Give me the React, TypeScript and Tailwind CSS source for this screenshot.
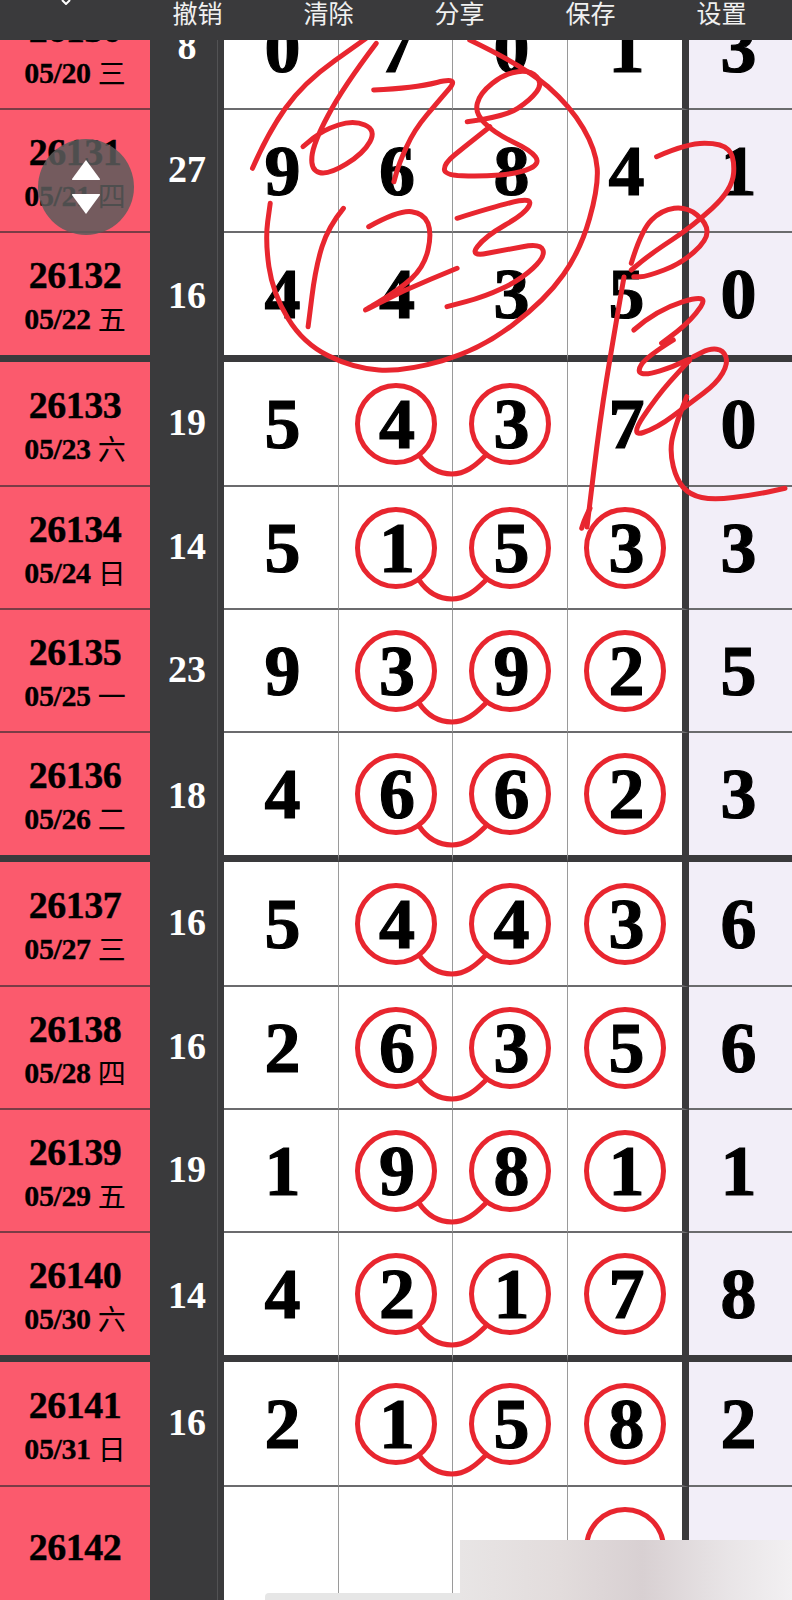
import React from "react";

type Row = { id: string; date?: string; day?: string; sum?: number; nums: (number | null)[]; circled: number[]; link: boolean };

const rows: Row[] = [
  { id: "26130", date: "05/20", day: "三", sum: 8, nums: [0, 7, 0, 1, 3], circled: [], link: false },
  { id: "26131", date: "05/21", day: "四", sum: 27, nums: [9, 6, 8, 4, 1], circled: [], link: false },
  { id: "26132", date: "05/22", day: "五", sum: 16, nums: [4, 4, 3, 5, 0], circled: [], link: false },
  { id: "26133", date: "05/23", day: "六", sum: 19, nums: [5, 4, 3, 7, 0], circled: [1, 2], link: true },
  { id: "26134", date: "05/24", day: "日", sum: 14, nums: [5, 1, 5, 3, 3], circled: [1, 2, 3], link: true },
  { id: "26135", date: "05/25", day: "一", sum: 23, nums: [9, 3, 9, 2, 5], circled: [1, 2, 3], link: true },
  { id: "26136", date: "05/26", day: "二", sum: 18, nums: [4, 6, 6, 2, 3], circled: [1, 2, 3], link: true },
  { id: "26137", date: "05/27", day: "三", sum: 16, nums: [5, 4, 4, 3, 6], circled: [1, 2, 3], link: true },
  { id: "26138", date: "05/28", day: "四", sum: 16, nums: [2, 6, 3, 5, 6], circled: [1, 2, 3], link: true },
  { id: "26139", date: "05/29", day: "五", sum: 19, nums: [1, 9, 8, 1, 1], circled: [1, 2, 3], link: true },
  { id: "26140", date: "05/30", day: "六", sum: 14, nums: [4, 2, 1, 7, 8], circled: [1, 2, 3], link: true },
  { id: "26141", date: "05/31", day: "日", sum: 16, nums: [2, 1, 5, 8, 2], circled: [1, 2, 3], link: true },
  { id: "26142", nums: [null, null, null, null, null], circled: [3], link: false },
];

function Digit({ value }: { value: number }) {
  return (
    <span className="pl-[3px] font-['Liberation_Serif',serif] text-[72px] font-bold leading-none text-black [-webkit-text-stroke:1.2px_#000]">
      {value}
    </span>
  );
}

function Cell({ value, circled, link, last, thick }: { value: number | null; circled: boolean; link: boolean; last: boolean; thick: boolean }) {
  const base = "relative flex items-center justify-center";
  const bottom = thick ? "border-b-[7px] border-b-[#3a3a3c]" : "border-b-2 border-b-[#6b6b6d]";
  const side = last ? "border-r-[7px] border-r-[#3a3a3c]" : "border-r border-r-[#9a9a9a]";
  return (
    <div className={`${base} ${bottom} ${side} bg-white`}>
      {value !== null && <Digit value={value} />}
      {circled && (
        <span className="absolute left-1/2 top-1/2 h-[82px] w-[82px] -translate-x-1/2 -translate-y-1/2 rounded-full border-[5px] border-[#e8262f]" />
      )}
      {link && (
        <svg className="absolute -right-[35px] top-[91px] z-10" width="70" height="24" viewBox="0 0 70 24" fill="none">
          <path d="M2 2 C10 14 20 21 35 21 C48 21 58 13 68 3" stroke="#e8262f" strokeWidth="5" strokeLinecap="round" />
        </svg>
      )}
    </div>
  );
}

function TableRow({ row, index }: { row: Row; index: number }) {
  const phase = (index + 1) % 4;
  const thick = phase === 3;
  const height = phase === 0 ? "h-[125px]" : thick ? "h-[129px]" : "h-[123px]";
  return (
    <div className={`grid grid-cols-[150px_74px_115px_114px_115px_121px_103px] ${height}`}>
      <div
        className={`flex flex-col items-center justify-center bg-[#fb5a6d] text-black font-['Liberation_Serif','Noto_Sans_CJK_SC',serif] ${
          row.date ? "pt-[6px]" : "pb-px"
        } ${thick ? "border-b-[7px] border-b-[#3a3a3c]" : "border-b-2 border-b-[#7a3c46]"}`}
      >
        <span className="text-[38px] font-bold leading-[43px] tracking-[-0.5px] [-webkit-text-stroke:0.4px_#000]">{row.id}</span>
        {row.date && (
          <span className="flex items-center gap-[7px] leading-[43px]">
            <span className="text-[30px] font-bold tracking-[-0.4px] [-webkit-text-stroke:0.3px_#000]">{row.date}</span>
            <span className="font-['Noto_Sans_CJK_SC',sans-serif] text-[28px] font-normal">{row.day}</span>
          </span>
        )}
      </div>
      <div className="flex items-center justify-center bg-[linear-gradient(to_right,#3a3a3c_67px,#525254_67px,#525254_68px,#3a3a3c_68px)] pb-1 font-['Liberation_Serif',serif] text-[38px] font-bold text-white">
        {row.sum}
      </div>
      {row.nums.slice(0, 4).map((n, i) => (
        <Cell key={i} value={n} circled={row.circled.includes(i)} link={row.link && i === 1} last={i === 3} thick={thick} />
      ))}
      <div
        className={`flex items-center justify-center bg-[#f2eef8] pr-[7px] ${
          thick ? "border-b-[7px] border-b-[#3a3a3c]" : "border-b-2 border-b-[#6b6b6d]"
        }`}
      >
        {row.nums[4] !== null && <Digit value={row.nums[4] as number} />}
      </div>
    </div>
  );
}

type P = [number, number][];
const a = (p: P) => p.map(([x, y]) => [x / 1.98, y / 3] as [number, number]);
const b = (p: P) => p.map(([x, y]) => [340 + x / 3, 340 + y / 3] as [number, number]);
const smooth = (p: [number, number][]) => {
  let d = `M${p[0][0].toFixed(1)} ${p[0][1].toFixed(1)}`;
  for (let i = 1; i < p.length - 1; i++) {
    const mx = (p[i][0] + p[i + 1][0]) / 2;
    const my = (p[i][1] + p[i + 1][1]) / 2;
    d += ` Q${p[i][0].toFixed(1)} ${p[i][1].toFixed(1)} ${mx.toFixed(1)} ${my.toFixed(1)}`;
  }
  const l = p[p.length - 1];
  return d + ` L${l[0].toFixed(1)} ${l[1].toFixed(1)}`;
};

const strokes = [
  a([[500,505],[530,400],[600,250],[725,115]]),
  a([[745,130],[680,260],[620,430],[615,510],[650,525],[720,460],[745,390],[700,360],[640,390],[600,440]]),
  a([[930,120],[1040,200],[1130,320],[1180,450],[1185,560],[1150,750],[1080,900],[950,1050],[800,1115],[700,1105],[600,1030],[540,880],[525,720],[535,610]]),
  a([[740,270],[820,265],[910,230],[870,300],[820,390],[790,490],[780,545]]),
  a([[925,365],[1000,350],[1050,300],[1075,250],[1050,210],[1000,220],[950,280],[940,340],[980,400],[1050,450],[1070,490],[1030,520],[950,530],[880,525],[880,490],[920,440],[970,380]]),
  a([[680,625],[650,680],[625,800],[610,980]]),
  a([[730,680],[790,630],[840,640],[855,700],[840,800],[790,870],[700,950],[800,870],[905,805]]),
  a([[905,655],[1000,610],[1055,595],[1040,640],[960,710],[930,770],[1000,750],[1070,730],[1080,770],[1030,840],[960,890],[885,920]]),
  a([[1300,470],[1360,430],[1430,430],[1455,470],[1450,570],[1370,680],[1290,760],[1250,810]]),
  a([[1250,790],[1270,690],[1310,630],[1360,620],[1400,670],[1400,720],[1350,790],[1280,830],[1255,830]]),
  [[624,277] as [number, number], [613,340] as [number, number], [600,420] as [number, number], [587,527] as [number, number]],
  b([[750,505],[735,535],[725,565]]),
  a([[1255,990],[1300,930],[1405,880],[1370,960],[1310,1030]]),
  b([[1000,0],[920,50],[890,95],[920,105],[1000,80],[1060,50],[1030,80],[950,170],[870,290],[950,265],[1050,190],[1130,130],[1165,70],[1150,30],[1110,25],[1060,50]]),
  b([[1040,170],[1000,270],[990,340],[1010,420],[1050,465],[1120,480],[1240,465],[1335,445]]),
];

export default function App() {
  return (
    <div className="relative h-[1600px] w-[792px] overflow-hidden bg-white">
      <header className="relative z-20 grid h-10 grid-cols-[131px_131px_131px_131px_131px_131px] bg-[#3a3a3c] pb-[29px] font-['Noto_Sans_CJK_SC',sans-serif] text-[25px] font-normal leading-none text-[#f0f0f0]">
        <div className="flex items-start justify-center">
          <svg width="14" height="5" viewBox="0 0 14 5" fill="none">
            <path d="M3 0 L7 4 L11 0" stroke="#ffffff" strokeWidth="2" />
          </svg>
        </div>
        {["撤销", "清除", "分享", "保存", "设置"].map((t) => (
          <div key={t} className="flex items-center justify-center pl-[2px]">
            {t}
          </div>
        ))}
      </header>

      <main className="-mt-[53px]">
        {rows.map((row, i) => (
          <TableRow key={row.id} row={row} index={i} />
        ))}
      </main>

      <svg className="absolute left-0 top-0 z-10" width="792" height="1600" viewBox="0 0 792 1600" fill="none">
        {strokes.map((s, i) => (
          <path key={i} d={smooth(s)} stroke="#e8262f" strokeWidth="5" strokeLinecap="round" strokeLinejoin="round" />
        ))}
      </svg>

      <div className="absolute left-[38px] top-[139px] z-30 flex h-24 w-24 items-center justify-center rounded-full bg-[#5c5c5c]/85">
        <svg width="30" height="56" viewBox="0 0 30 56" fill="#ffffff">
          <path d="M15 1 L29 20 Q29.5 21 28 21 L2 21 Q0.5 21 1 20 Z" />
          <path d="M15 55 L29 36 Q29.5 35 28 35 L2 35 Q0.5 35 1 36 Z" />
        </svg>
      </div>

      <div className="absolute bottom-0 left-[265px] z-30 h-[7px] w-[300px] rounded-t bg-[#e6e6e6]" />
      <div className="absolute bottom-0 right-0 z-30 h-[60px] w-[332px] bg-[linear-gradient(to_right,#e8e5e5,#e2dcdc_30%,#d8d0d2_55%,#e8e4e6_80%,#f2f0f2)]" />
    </div>
  );
}
